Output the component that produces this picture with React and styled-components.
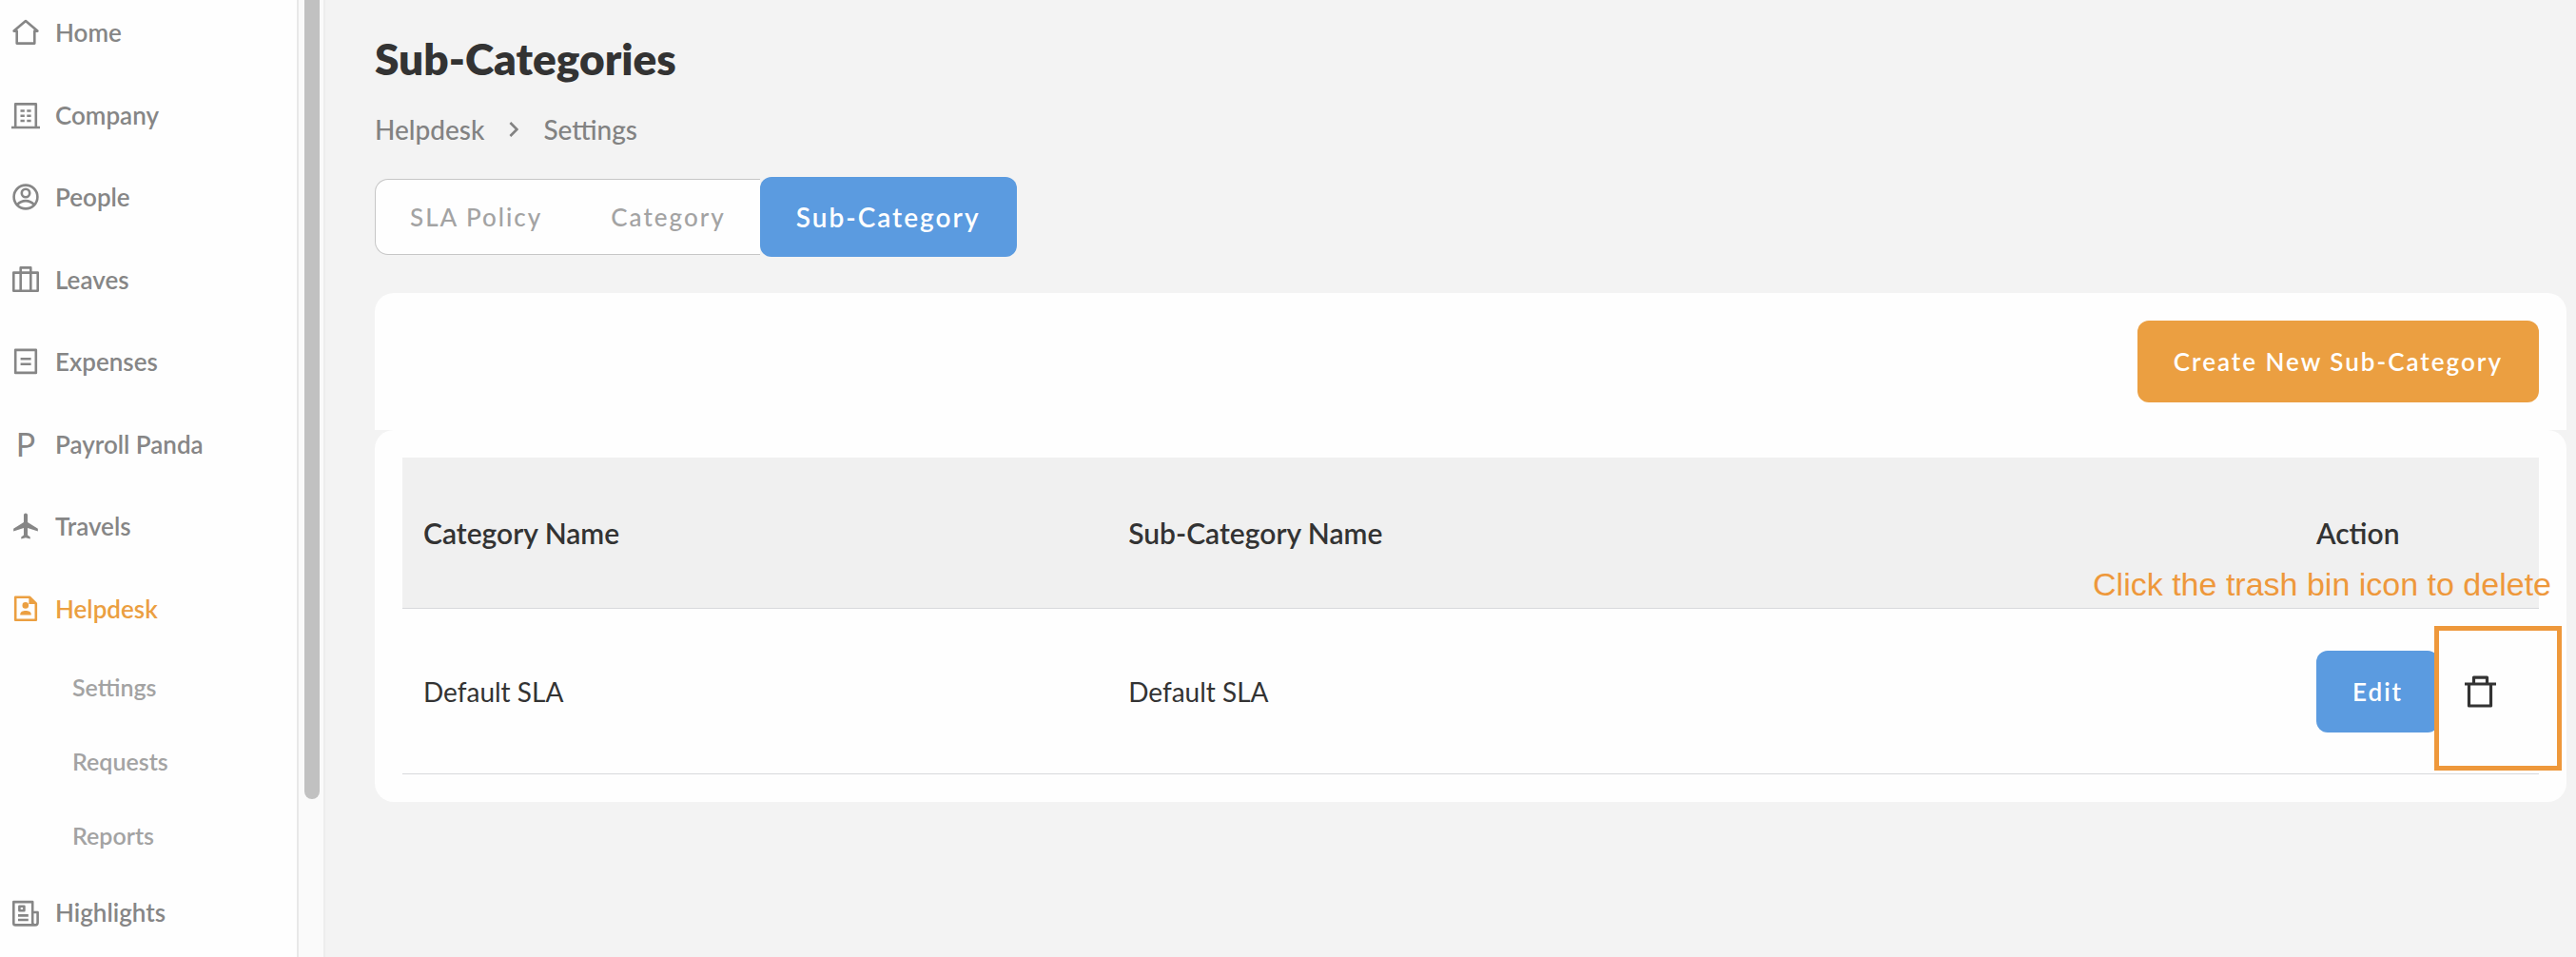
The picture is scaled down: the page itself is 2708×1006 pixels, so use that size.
import React from 'react';
import styled, { createGlobalStyle } from 'styled-components';

const color = {
  page: '#f3f3f3',
  surface: '#fefefe',
  ink: '#333333',
  nav: '#868686',
  muted: '#a3a3a3',
  orange: '#eb9f41',
  blue: '#5b9be0',
  callout: '#ee983b',
  line: '#d8d9dc',
};

const GlobalStyle = createGlobalStyle`
  *, *::before, *::after { box-sizing: border-box; }
  body {
    margin: 0;
    background: ${color.page};
    color: ${color.ink};
    font-family: Lato, "Liberation Sans", sans-serif;
    font-size: 28px;
  }
  ul, ol { list-style: none; margin: 0; padding: 0; }
  a { color: inherit; text-decoration: none; }
  button { font: inherit; border: 0; background: none; cursor: pointer; }
`;

const Shell = styled.div`
  display: flex;
  height: 100vh;
  overflow: hidden;
`;

const Sidebar = styled.aside`
  display: flex;
  flex: none;
  width: 342px;
  background: ${color.surface};
`;

const Nav = styled.nav`
  flex: 1;
  margin-top: -9px;
`;

const MenuList = styled.ul`
  display: grid;
  grid-auto-rows: 1fr;
  height: ${(p) => p.$height}px;
`;

const MenuLink = styled.a`
  display: flex;
  align-items: center;
  gap: 16px;
  height: 100%;
  padding-left: 12px;
  font-size: 26px;
  font-weight: 600;
  color: ${(p) => (p.$active ? color.orange : color.nav)};
`;

const SubLink = styled.a`
  display: block;
  padding-left: 76px;
  font-size: 25px;
  font-weight: 600;
  line-height: 78px;
  color: ${color.muted};
`;

const ScrollTrack = styled.div`
  width: 30px;
  padding: 0 4px 0 6px;
  border-left: 2px solid #e8e8e8;
  border-right: 2px solid #ededed;
  background: #fafafa;
`;

const ScrollThumb = styled.div`
  width: 16px;
  height: 83.5%;
  border-radius: 0 0 8px 8px;
  background: #c1c1c1;
`;

const IconSvg = styled.svg`
  flex: none;
  width: 30px;
  height: 30px;
  fill: none;
  stroke: currentColor;
  stroke-width: 2.6;
`;

const LetterIcon = styled.span`
  flex: none;
  width: 30px;
  text-align: center;
  font-size: 34px;
  font-weight: 400;
`;

const Main = styled.main`
  flex: 1;
  min-width: 0;
  padding: 32px 10px 0 52px;
`;

const Title = styled.h1`
  margin: 0;
  font-size: 46px;
  font-weight: 800;
  line-height: 60px;
`;

const Breadcrumb = styled.ol`
  display: flex;
  align-items: center;
  gap: 26px;
  margin: 24px 0 30px;
  font-weight: 500;
  line-height: 40px;
  color: #828282;
`;

const Crumb = styled.li`
  display: flex;
  align-items: center;
  gap: 26px;
`;

const Chevron = styled.svg`
  width: 10px;
  height: 18px;
  fill: none;
  stroke: currentColor;
  stroke-width: 2.6;
`;

const Tabs = styled.div`
  display: flex;
  align-items: center;
  height: 84px;
  margin-bottom: 38px;
`;

const Tab = styled.button`
  height: 80px;
  padding: 0 36px;
  border: solid #c6c6c6;
  border-width: 1px 0;
  background: ${color.surface};
  color: ${color.muted};
  font-size: 26px;
  font-weight: 500;
  letter-spacing: 2px;

  &:first-child {
    border-left-width: 1px;
    border-radius: 14px 0 0 14px;
  }

  &[aria-selected='true'] {
    height: 84px;
    padding: 0 38px;
    border: 0;
    border-radius: 12px;
    background: ${color.blue};
    color: #fff;
    font-size: 28px;
    font-weight: 600;
  }
`;

const Toolbar = styled.section`
  display: flex;
  justify-content: flex-end;
  padding: 29px;
  border-radius: 20px 20px 0 0;
  background: ${color.surface};
`;

const Button = styled.button`
  height: 86px;
  padding: 0 38px;
  border-radius: 12px;
  background: ${(p) => p.$tone};
  color: #fff;
  font-size: 26px;
  font-weight: 600;
  letter-spacing: 2px;
`;

const Card = styled.section`
  padding: 29px;
  border-radius: 20px;
  background: ${color.surface};
`;

const Table = styled.table`
  width: 100%;
  table-layout: fixed;
  border-collapse: separate;
  border-spacing: 0;
  text-align: left;
`;

const Col = styled.col`
  width: ${(p) => p.$width};
`;

const Th = styled.th`
  position: relative;
  height: 159px;
  padding: 0 22px;
  border-bottom: 1px solid ${color.line};
  background: #f0f0f0;
  font-size: 30px;
  font-weight: 600;
`;

const Td = styled.td`
  position: relative;
  height: 174px;
  padding: 0 22px;
  border-bottom: 1px solid ${color.line};
`;

const Actions = styled.div`
  display: flex;
  align-items: center;
  gap: 26px;
`;

const IconButton = styled.button`
  display: flex;
  padding: 0;
  color: ${color.ink};
`;

const TrashSvg = styled.svg`
  width: 36px;
  height: 36px;
  fill: none;
  stroke: currentColor;
  stroke-width: 3.2;
  stroke-linejoin: round;
`;

const CalloutText = styled.span`
  position: absolute;
  right: -13px;
  bottom: 5px;
  color: ${color.callout};
  font-family: "Liberation Sans", Arial, sans-serif;
  font-size: 34px;
  font-weight: 400;
  line-height: 40px;
  white-space: nowrap;
`;

const CalloutBox = styled.span`
  position: absolute;
  top: 18px;
  right: -24px;
  width: 134px;
  height: 152px;
  border: 5px solid ${color.callout};
  pointer-events: none;
`;

const Icon = ({ children, viewBox = '0 0 30 30' }) => (
  <IconSvg viewBox={viewBox} aria-hidden="true">{children}</IconSvg>
);

const icons = {
  home: (
    <Icon><path d="M5.7 13.6H2.6L15 3l12.4 10.6h-3.1v13H5.7z" strokeLinejoin="round" /></Icon>
  ),
  company: (
    <Icon>
      <path d="M4.2 28V3.4h21.6V28M0 28h30" strokeLinejoin="round" />
      <path d="M9.5 10.5h4.3M16.3 10.5h4.3M9.5 15.8h4.3M16.3 15.8h4.3M9.5 21h4.3M16.3 21h4.3" />
    </Icon>
  ),
  people: (
    <Icon>
      <circle cx="15" cy="15" r="12.4" />
      <circle cx="15" cy="11" r="4.2" />
      <path d="M6.2 23.2c4.6-5.4 13-5.4 17.6 0" />
    </Icon>
  ),
  leaves: (
    <Icon>
      <path d="M2.3 7.6h25.4v19.2H2.3zM9.7 26.8V2.4h10.6v24.4" strokeLinejoin="round" />
    </Icon>
  ),
  expenses: (
    <Icon>
      <path d="M4.2 2.9h21.6v24H4.2z" strokeLinejoin="round" />
      <path d="M9.6 12.3h11M9.6 17.8h11" />
    </Icon>
  ),
  payroll: <LetterIcon aria-hidden="true">P</LetterIcon>,
  travels: (
    <Icon viewBox="0.4 0.9 22.2 22.2">
      <path
        fill="currentColor"
        stroke="none"
        d="M21 16v-2l-8-5V3.5c0-.83-.67-1.5-1.5-1.5S10 2.67 10 3.5V9l-8 5v2l8-2.5V19l-2 1.5V22l3.5-1 3.5 1v-1.5L13 19v-5.5l8 2.5z"
      />
    </Icon>
  ),
  helpdesk: (
    <Icon>
      <path d="M4.2 2.7h14.8l6.8 6.8v17.2H4.2z" strokeLinejoin="round" />
      <g fill="currentColor" stroke="none">
        <path d="M18.4 3l7 7h-7z" />
        <circle cx="14.8" cy="11.4" r="3.3" />
        <path d="M9.3 21.4v-1c0-4.6 11.4-4.6 11.4 0v1z" />
      </g>
    </Icon>
  ),
  highlights: (
    <Icon>
      <path d="M25.4 28.4H4.3a2 2 0 0 1-2-2V4.1h19.9v21.7a2.6 2.6 0 0 0 5.4 0V15h-5.4M8.4 8.7h5v4.6h-5zM7 18.4h10.8M7 23h10.8" strokeLinejoin="round" />
    </Icon>
  ),
};

const topItems = [
  ['Home', 'home'],
  ['Company', 'company'],
  ['People', 'people'],
  ['Leaves', 'leaves'],
  ['Expenses', 'expenses'],
  ['Payroll Panda', 'payroll'],
  ['Travels', 'travels'],
  ['Helpdesk', 'helpdesk'],
];

const MenuItem = ({ label, icon, active }) => (
  <li>
    <MenuLink href="#" $active={active}>
      {icons[icon]}
      {label}
    </MenuLink>
  </li>
);

export default function App() {
  return (
    <Shell>
      <GlobalStyle />
      <Sidebar>
        <Nav aria-label="Main">
          <MenuList $height={692}>
            {topItems.map(([label, icon]) => (
              <MenuItem key={label} label={label} icon={icon} active={label === 'Helpdesk'} />
            ))}
          </MenuList>
          <ul>
            {['Settings', 'Requests', 'Reports'].map((label) => (
              <li key={label}><SubLink href="#">{label}</SubLink></li>
            ))}
          </ul>
          <MenuList $height={84}>
            <MenuItem label="Highlights" icon="highlights" />
          </MenuList>
        </Nav>
        <ScrollTrack><ScrollThumb /></ScrollTrack>
      </Sidebar>

      <Main>
        <Title>Sub-Categories</Title>
        <Breadcrumb aria-label="Breadcrumb">
          <Crumb>
            <a href="#">Helpdesk</a>
            <Chevron viewBox="0 0 10 18" aria-hidden="true">
              <path d="M1.4 2l7 7-7 7" />
            </Chevron>
          </Crumb>
          <Crumb><a href="#">Settings</a></Crumb>
        </Breadcrumb>

        <Tabs role="tablist">
          <Tab type="button" role="tab" aria-selected="false">SLA Policy</Tab>
          <Tab type="button" role="tab" aria-selected="false">Category</Tab>
          <Tab type="button" role="tab" aria-selected="true">Sub-Category</Tab>
        </Tabs>

        <Toolbar>
          <Button type="button" $tone={color.orange}>Create New Sub-Category</Button>
        </Toolbar>

        <Card>
          <Table>
            <colgroup>
              <Col $width="33%" />
              <Col $width="auto" />
              <Col $width="256px" />
            </colgroup>
            <thead>
              <tr>
                <Th scope="col">Category Name</Th>
                <Th scope="col">Sub-Category Name</Th>
                <Th scope="col">
                  Action
                  <CalloutText>Click the trash bin icon to delete</CalloutText>
                </Th>
              </tr>
            </thead>
            <tbody>
              <tr>
                <Td>Default SLA</Td>
                <Td>Default SLA</Td>
                <Td>
                  <Actions>
                    <Button type="button" $tone={color.blue}>Edit</Button>
                    <IconButton type="button" aria-label="Delete">
                      <TrashSvg viewBox="0 0 36 36" aria-hidden="true">
                        <path d="M1 10h33M5.5 10v23h23V10M10.5 10V3.2h14V10" />
                      </TrashSvg>
                    </IconButton>
                  </Actions>
                  <CalloutBox />
                </Td>
              </tr>
            </tbody>
          </Table>
        </Card>
      </Main>
    </Shell>
  );
}
